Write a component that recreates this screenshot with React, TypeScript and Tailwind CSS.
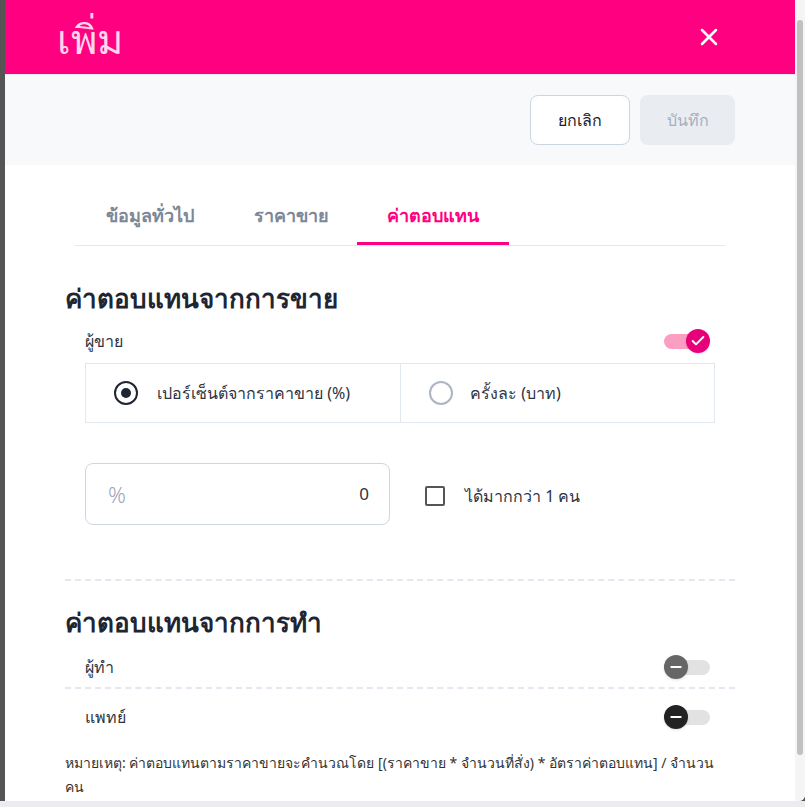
import { X, Check, Minus } from "lucide-react"

const font = { fontFamily: '"Noto Sans", "Liberation Sans", sans-serif' }

function OffToggle({ knob }: { knob: string }) {
  return (
    <div className="relative w-[46px] h-6 flex items-center">
      <div className="w-full h-[15px] rounded-full bg-[#e2e2e2]" />
      <div className={`absolute left-0 w-6 h-6 rounded-full ${knob} flex items-center justify-center shadow-sm`}>
        <Minus className="w-4 h-4 text-white" strokeWidth={3} />
      </div>
    </div>
  )
}

export default function App() {
  return (
    <div className="w-[805px] h-[807px] bg-[#ebebf1] flex flex-col overflow-hidden" style={font}>
      <div className="h-[801px] flex bg-[#555555]">
        <div className="w-[5px] shrink-0" />
        <div className="flex-1 bg-white rounded-br-md flex overflow-hidden">
          <div className="w-[790px] flex flex-col">
            {/* Header */}
            <div className="h-[74px] bg-[#ff0080] flex items-center justify-between pl-[52px] pr-[72px]">
              <h1 className="text-[40px] leading-none text-[#ffd6ec] font-normal pt-1">เพิ่ม</h1>
              <X className="w-7 h-7 text-white" strokeWidth={2.2} />
            </div>

            {/* Toolbar */}
            <div className="h-[91px] bg-[#f8f9fb] border-t border-[#e3e7f0] flex items-center justify-end gap-2.5 pr-[60px]">
              <button className="w-[100px] h-[50px] rounded-lg border border-[#cdd5e3] bg-white text-[16px] text-[#1a202c]">
                ยกเลิก
              </button>
              <button className="w-[95px] h-[50px] rounded-lg bg-[#e9edf1] text-[16px] text-[#a5b0c0]">
                บันทึก
              </button>
            </div>

            {/* Body */}
            <div className="px-[60px] pt-[30px] flex flex-col">
              <div className="mx-2.5 flex border-b border-[#e5e7eb] text-[18px] font-bold">
                <div className="w-[150px] h-[50px] flex items-center justify-center pb-[10px] text-[#7c8797]">ข้อมูลทั่วไป</div>
                <div className="w-[132px] h-[50px] flex items-center justify-center pb-[10px] text-[#7c8797]">ราคาขาย</div>
                <div className="w-[152px] h-[50px] flex items-center justify-center pb-[7px] text-[#ff0080] border-b-[3px] border-[#ff0080]">
                  ค่าตอบแทน
                </div>
              </div>

              <h2 className="mt-[36px] text-[26px] font-bold text-[#1e2533] leading-[32px]">ค่าตอบแทนจากการขาย</h2>

              <div className="mt-[15px] pl-5 pr-[25px] flex items-center justify-between h-6">
                <span className="text-[16px] text-[#2d3340]">ผู้ขาย</span>
                <div className="relative w-[46px] h-6 flex items-center">
                  <div className="w-[38px] h-[15px] rounded-full bg-[#fc9ec2]" />
                  <div className="absolute right-0 w-6 h-6 rounded-full bg-[#e8007a] flex items-center justify-center shadow">
                    <Check className="w-4 h-4 text-white" strokeWidth={3} />
                  </div>
                </div>
              </div>

              <div className="mt-[10px] ml-5 mr-5 h-[60px] border border-[#e2e8f0] flex">
                <div className="w-[315px] border-r border-[#e2e8f0] flex items-center pl-[28px] gap-[19px]">
                  <div className="w-6 h-6 rounded-full border-2 border-[#1f2633] flex items-center justify-center">
                    <div className="w-2.5 h-2.5 rounded-full bg-[#1f2633]" />
                  </div>
                  <span className="text-[16px] text-[#2d3340]">เปอร์เซ็นต์จากราคาขาย (%)</span>
                </div>
                <div className="flex-1 flex items-center pl-7 gap-[17px]">
                  <div className="w-6 h-6 rounded-full border-2 border-[#adb5c4]" />
                  <span className="text-[16px] text-[#2d3340]">ครั้งละ (บาท)</span>
                </div>
              </div>

              <div className="mt-10 ml-5 flex items-center">
                <div className="w-[305px] h-[62px] rounded-lg border border-[#cfd6e2] flex items-center justify-between pl-[22px] pr-5">
                  <span className="text-[22px] text-[#9aa5b8] font-light">%</span>
                  <span className="text-[17px] text-[#2d3340]">0</span>
                </div>
                <div className="ml-[35px] mt-1 w-5 h-5 border-2 border-[#555] rounded-[2px]" />
                <span className="ml-5 mt-1 text-[16px] text-[#2d3340]">ได้มากกว่า 1 คน</span>
              </div>

              <div className="mt-[54px] border-t-2 border-dashed border-[#e3e8f0]" />

              <h2 className="mt-[25px] text-[26px] font-bold text-[#1e2533] leading-[32px]">ค่าตอบแทนจากการทำ</h2>

              <div className="mt-[9px] pl-5 pr-[25px] flex items-center justify-between h-[40px]">
                <span className="text-[16px] text-[#2d3340]">ผู้ทำ</span>
                <OffToggle knob="bg-[#666666]" />
              </div>
              <div className="border-t-2 border-dashed border-[#e3e8f0]" />
              <div className="pl-5 pr-[25px] flex items-center justify-between h-[56px]">
                <span className="text-[16px] text-[#2d3340]">แพทย์</span>
                <OffToggle knob="bg-[#222222]" />
              </div>

              <p className="mt-[6px] text-[14px] leading-6 text-[#333333]">
                หมายเหตุ: ค่าตอบแทนตามราคาขายจะคำนวณโดย [(ราคาขาย * จำนวนที่สั่ง) * อัตราค่าตอบแทน] / จำนวน คน
              </p>
            </div>
          </div>
          {/* scrollbar */}
          <div className="w-[10px] bg-[#f5f5f5] flex justify-center pt-5">
            <div className="w-[6px] h-[735px] rounded-full bg-[#c1c1c1]" />
          </div>
        </div>
      </div>
    </div>
  )
}
